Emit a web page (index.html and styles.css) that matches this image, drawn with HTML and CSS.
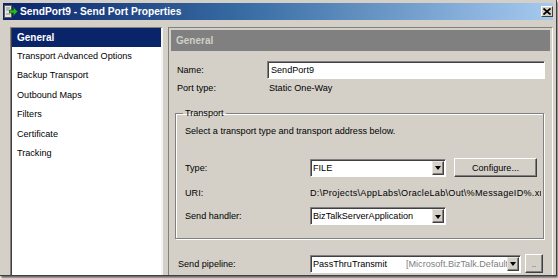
FILE: index.html
```html
<!DOCTYPE html>
<html>
<head>
<meta charset="utf-8">
<title>SendPort9 - Send Port Properties</title>
<link rel="stylesheet" href="styles.css">
</head>
<body>
<div class="window">
  <div class="titlebar">
    <svg class="app-icon" width="14" height="13" viewBox="0 0 14 13">
      <rect x="0.5" y="0.5" width="7" height="12" fill="#e6e6e6" stroke="#5a5a5a"/>
      <path d="M2 3h4M2 5h3M2 9h4" stroke="#8a8a8a"/>
      <path d="M5.5 5h4V2.2l4 4.3-4 4.3V8h-4z" fill="#34b034" stroke="#0c6a0c" stroke-width="0.8"/>
    </svg>
    <span class="title">SendPort9 - Send Port Properties</span>
    <div class="close">
      <svg width="8" height="7" viewBox="0 0 8 7"><path d="M0.5 0.5l7 6M7.5 0.5l-7 6" stroke="#000" stroke-width="1.7"/></svg>
    </div>
  </div>
  <div class="content">
    <ul class="nav">
      <li class="active">General</li>
      <li>Transport Advanced Options</li>
      <li>Backup Transport</li>
      <li>Outbound Maps</li>
      <li>Filters</li>
      <li>Certificate</li>
      <li>Tracking</li>
    </ul>
    <div class="page">
      <div class="page-header">General</div>
      <div class="form">
        <div class="row row-name">
          <span class="label">Name:</span>
          <div class="textbox">SendPort9</div>
        </div>
        <div class="row row-type">
          <span class="label">Port type:</span>
          <span class="value">Static One-Way</span>
        </div>
        <fieldset class="group">
          <legend>Transport</legend>
          <p class="hint">Select a transport type and transport address below.</p>
          <div class="grow grow-type">
            <span class="label">Type:</span>
            <div class="combo combo-short"><span class="combo-text">FILE</span><span class="arrow"></span></div>
            <div class="button btn-configure">Configure...</div>
          </div>
          <div class="grow grow-uri">
            <span class="label">URI:</span>
            <span class="uri">D:\Projects\AppLabs\OracleLab\Out\%MessageID%.xml</span>
          </div>
          <div class="grow grow-handler">
            <span class="label">Send handler:</span>
            <div class="combo combo-short"><span class="combo-text">BizTalkServerApplication</span><span class="arrow"></span></div>
          </div>
        </fieldset>
        <div class="row row-pipeline">
          <span class="label">Send pipeline:</span>
          <div class="combo combo-long"><span class="combo-text"><span class="pipe-name">PassThruTransmit</span><span class="pipe-asm">[Microsoft.BizTalk.DefaultPipelines]</span></span><span class="arrow"></span></div>
          <div class="button btn-dots">..</div>
        </div>
      </div>
    </div>
  </div>
</div>
</body>
</html>
```
FILE: styles.css
```css
* { box-sizing: border-box; }
html, body { margin: 0; padding: 0; }
body {
  width: 558px;
  height: 279px;
  overflow: hidden;
  background: #ffffff;
  font-family: "Liberation Sans", Arial, sans-serif;
  font-size: 9.1px;
  color: #000;
}
.window {
  width: 557px;
  height: 276px;
  background: #d4d0c8;
  border-right: 1px solid #404040;
  border-bottom: 1px solid #404040;
  padding: 3px 3px 0 3px;
  box-shadow: 1px 2px 2px rgba(0, 0, 0, 0.6);
  display: flex;
  flex-direction: column;
  overflow: hidden;
}
.titlebar {
  height: 17px;
  flex: none;
  display: flex;
  align-items: center;
  padding-left: 1px;
  background: linear-gradient(to right, #0a246a 0%, #3a6ea5 45%, #a6caf0 100%);
}
.app-icon { flex: none; margin-right: 2px; }
.title {
  color: #fff;
  font-weight: bold;
  font-size: 10.2px;
  white-space: nowrap;
}
.close {
  margin-left: auto;
  width: 12px;
  height: 11px;
  background: #d4d0c8;
  border: 1px solid;
  border-color: #fff #404040 #404040 #fff;
  display: flex;
  align-items: center;
  justify-content: center;
}
.content {
  flex: 1;
  display: flex;
  padding: 7px 0 0 7px;
  min-height: 0;
}
.nav {
  list-style: none;
  margin: 0;
  padding: 0 0 0 1px;
  width: 153px;
  height: 260px;
  background: #fff;
  border-top: 1px solid #808080;
  border-left: 1px solid #808080;
  border-right: 2px solid #f4f4f4;
  box-shadow: inset 1px 0 0 #404040;
  flex: none;
}
.nav li {
  height: 19.45px;
  line-height: 19px;
  padding-left: 5px;
  white-space: nowrap;
}
.nav li.active {
  background: #0a246a;
  color: #fff;
  font-weight: bold;
  font-size: 10px;
  height: 19px;
}
.page {
  margin-left: 5px;
  width: 385px;
  height: 260px;
  border-top: 1px solid #808080;
  border-left: 1px solid #808080;
  border-right: 1px solid #fff;
  padding: 2px 2px 0 2px;
  flex: none;
}
.page-header {
  height: 21px;
  line-height: 21px;
  background: #808080;
  color: #d0cec8;
  font-weight: bold;
  font-size: 10px;
  padding-left: 5px;
}
.form {
  padding: 0 5px 0 6px;
}
.row {
  display: grid;
  align-items: center;
  height: 18px;
}
.row-name { margin-top: 10px; grid-template-columns: 90px 1fr; }
.row-type { grid-template-columns: 90px 1fr; }
.row-type .value { padding-left: 2px; }
.textbox {
  height: 18px;
  line-height: 14px;
  background: #fff;
  border: 1px solid;
  border-color: #808080 #fff #fff #808080;
  box-shadow: inset 1px 1px 0 #404040;
  padding: 1px 0 0 3px;
}
.group {
  margin: 10px 1px 0 -2px;
  padding: 0 8px 13px 9px;
  border: 1px solid #808080;
  box-shadow: 1px 1px 0 #fff, inset 1px 1px 0 #fff;
  min-width: 0;
}
.group legend {
  padding: 0 2px;
  margin-left: -2px;
  line-height: 13px;
}
.hint {
  margin: 4px 0 0 0;
  line-height: 14px;
}
.grow {
  display: grid;
  grid-template-columns: 125px 136px 83px;
  column-gap: 0;
  align-items: center;
}
.grow-type { margin-top: 20px; height: 19px; }
.grow-type .btn-configure { margin-left: 8px; }
.grow-uri { margin-top: 7px; height: 18px; grid-template-columns: 125px 231px; }
.grow-handler { margin-top: 5px; height: 18px; }
.uri {
  white-space: nowrap;
  overflow: hidden;
  letter-spacing: 0.28px;
}
.combo {
  height: 18px;
  background: #fff;
  border: 1px solid;
  border-color: #808080 #fff #fff #808080;
  box-shadow: inset 1px 1px 0 #404040;
  display: flex;
  align-items: stretch;
  padding: 1px;
}
.combo-text {
  flex: 1;
  min-width: 0;
  overflow: hidden;
  white-space: nowrap;
  line-height: 14px;
  padding-left: 1px;
}
.arrow {
  flex: none;
  width: 12px;
  background: #d4d0c8;
  border: 1px solid;
  border-color: #e8e6e0 #404040 #404040 #e8e6e0;
  box-shadow: inset -1px -1px 0 #808080;
  display: flex;
  align-items: center;
  justify-content: center;
}
.arrow::after {
  content: "";
  border-left: 3.5px solid transparent;
  border-right: 3.5px solid transparent;
  border-top: 4px solid #000;
  margin-top: 1px;
}
.button {
  background: #d4d0c8;
  border: 1px solid;
  border-color: #fff #404040 #404040 #fff;
  box-shadow: inset -1px -1px 0 #808080;
  display: flex;
  align-items: center;
  justify-content: center;
  white-space: nowrap;
}
.btn-configure { height: 19px; width: 83px; }
.row-pipeline {
  margin-top: 15px;
  margin-left: 1px;
  grid-template-columns: 132px 211px 18px;
  column-gap: 0;
}
.row-pipeline .btn-dots { margin-left: 4px; width: 18px; }
.combo-long { height: 18px; }
.pipe-name { display: inline-block; width: 93px; }
.pipe-asm { color: #808080; }
.btn-dots { height: 19px; font-size: 8px; line-height: 8px; padding-top: 3px; color: #404040; }
```
